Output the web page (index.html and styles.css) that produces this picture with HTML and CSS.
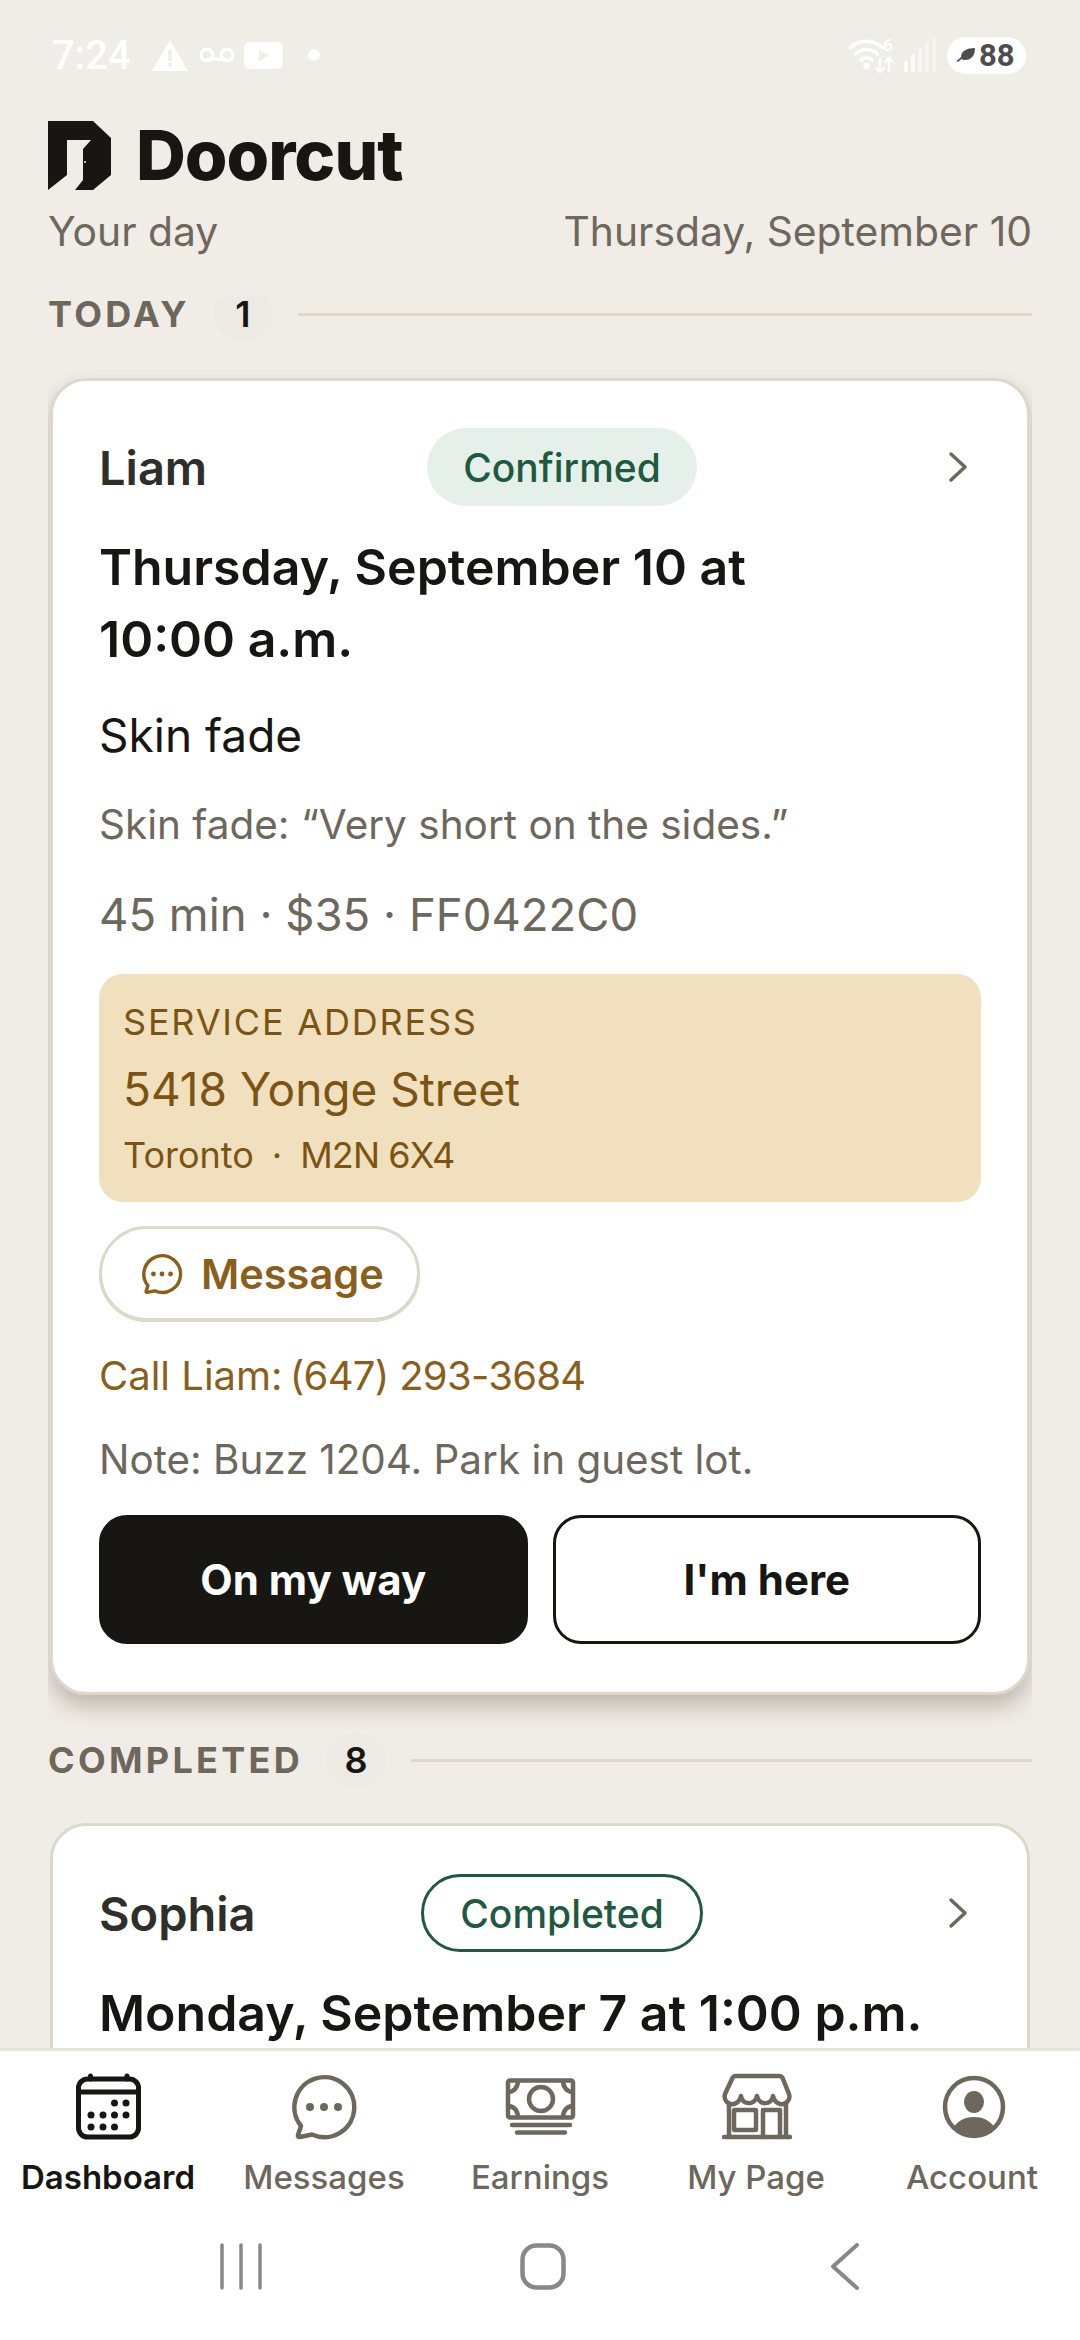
FILE: index.html
```html
<!DOCTYPE html>
<html lang="en">
<head>
  <meta charset="UTF-8">
  <meta name="viewport" content="width=device-width, initial-scale=1.0">
  <title>Doorcut</title>
  <link rel="stylesheet" href="styles.css">
</head>
<body>
  <!-- Status bar -->
  <div class="status">
    <span class="status-time">7:24</span>
    <svg class="ic-warn" viewBox="0 0 36 31"><path d="M18 0 36 31H0Z" fill="#fff"/><path d="M16.3 10h3.4v11h-3.4zM16.3 23h3.4v4h-3.4z" fill="#f0ede6"/></svg>
    <svg class="ic-vm" viewBox="0 0 36 16"><circle cx="8" cy="8" r="5.8" fill="none" stroke="#fff" stroke-width="3.4"/><circle cx="28" cy="8" r="5.8" fill="none" stroke="#fff" stroke-width="3.4"/><path d="M8 12.2H28" stroke="#fff" stroke-width="3.4"/></svg>
    <svg class="ic-yt" viewBox="0 0 39 27"><rect width="39" height="27" rx="6" fill="#fff"/><path d="M15 8 25 13.500 15 19Z" fill="#f0ede6"/></svg>
    <span class="status-dot"></span>
    <span class="status-spacer"></span>
    <svg class="ic-wifi" viewBox="0 0 50 36">
      <g fill="none" stroke="#fff" stroke-width="3.600" stroke-linecap="round">
        <path d="M2 10C12 1 25 1 35 10"/><path d="M7.500 16C14 10 23 10 29.500 16"/><path d="M13 22C16 19 21 19 24 22"/>
      </g>
      <circle cx="18.500" cy="28" r="3.200" fill="#fff"/>
      <g fill="none" stroke="#fff" stroke-width="2.400">
        <path d="M32 20V34M27.500 29.500 32 34 36.500 29.500"/><path d="M41 34V20M36.500 24.500 41 20 45.500 24.500"/>
      </g>
    </svg>
    <span class="status-six">6</span>
    <svg class="ic-signal" viewBox="0 0 32 34">
      <rect x="0" y="23" width="4" height="11" rx="1.500" fill="#fff"/>
      <rect x="7" y="16" width="4" height="18" rx="1.500" fill="#fff" opacity=".75"/>
      <rect x="14" y="10" width="4" height="24" rx="1.500" fill="#fff" opacity=".5"/>
      <rect x="21" y="5" width="4" height="29" rx="1.500" fill="#fff" opacity=".4"/>
      <rect x="28" y="0" width="4" height="34" rx="1.500" fill="#fff" opacity=".4"/>
    </svg>
    <span class="battery">
      <svg class="ic-leaf" viewBox="0 0 20 16"><path d="M5 10C5 4 11 1 19 1 19 9 15 13 9 13 7.500 13 6.500 12.500 5.500 12L2 15 .5 14 4 11Z" fill="#4d4d4f"/></svg>
      88
    </span>
  </div>

  <div class="content">
    <div class="brand">
      <svg class="brand-mark" viewBox="0 0 63 69">
        <path d="M0 0H45L63 17V54L45 69H27L35 59V28L43 19H19V54L0 69Z" fill="#171612"/>
        <circle cx="37" cy="41" r="1" fill="#f0ede6"/>
      </svg>
      <span class="brand-name">Doorcut</span>
    </div>

    <div class="day-row">
      <span>Your day</span>
      <span>Thursday, September 10</span>
    </div>

    <!-- Today -->
    <div class="section-label section-today">
      <span class="section-title">TODAY</span>
      <span class="section-count">1</span>
      <span class="section-line"></span>
    </div>

    <div class="card card-today">
      <div class="card-head">
        <span class="client">Liam</span>
        <span class="pill pill-confirmed">Confirmed</span>
        <svg class="chevron" viewBox="0 0 20 32"><path d="M3 3 17 16 3 29" fill="none" stroke="#6d675c" stroke-width="3.500" stroke-linecap="round" stroke-linejoin="round"/></svg>
      </div>
      <div class="when">Thursday, September 10 at 10:00&nbsp;a.m.</div>
      <div class="service">Skin fade</div>
      <div class="request">Skin fade: “Very short on the sides.”</div>
      <div class="meta">45 min · $35 · FF0422C0</div>

      <div class="address">
        <div class="address-label">SERVICE ADDRESS</div>
        <div class="address-street">5418 Yonge Street</div>
        <div class="address-city">Toronto<span class="address-sep">·</span><span class="address-postal">M2N 6X4</span></div>
      </div>

      <button class="message-btn">
        <svg class="message-icon" viewBox="0 0 72 72">
          <path d="M13 55A30 30 0 1 1 24 63.500L12 66Q9.500 66.500 10 64Z" fill="none" stroke="#8a5f1b" stroke-width="5.500" stroke-linejoin="round"/>
          <circle cx="22" cy="36" r="4" fill="#8a5f1b"/><circle cx="36" cy="36" r="4" fill="#8a5f1b"/><circle cx="50" cy="36" r="4" fill="#8a5f1b"/>
        </svg>
        Message
      </button>

      <div class="call">Call Liam:<span class="call-number">(647) 293-3684</span></div>
      <div class="note">Note: Buzz 1204. Park in guest lot.</div>

      <div class="actions">
        <button class="action action-dark">On my way</button>
        <button class="action action-light">I'm here</button>
      </div>
    </div>

    <!-- Completed -->
    <div class="section-label section-completed">
      <span class="section-title">COMPLETED</span>
      <span class="section-count">8</span>
      <span class="section-line"></span>
    </div>

    <div class="card card-completed">
      <div class="card-head">
        <span class="client">Sophia</span>
        <span class="pill pill-completed">Completed</span>
        <svg class="chevron" viewBox="0 0 20 32"><path d="M3 3 17 16 3 29" fill="none" stroke="#6d675c" stroke-width="3.500" stroke-linecap="round" stroke-linejoin="round"/></svg>
      </div>
      <div class="when">Monday, September 7 at 1:00&nbsp;p.m.</div>
    </div>
  </div>

  <!-- Bottom tabs -->
  <nav class="tabbar">
    <div class="tab tab-active">
      <svg class="tab-icon" viewBox="0 0 72 72">
        <rect x="6.500" y="8" width="60" height="58" rx="9" fill="none" stroke="#171612" stroke-width="5"/>
        <path d="M6.500 21H66.500" stroke="#171612" stroke-width="5"/>
        <path d="M18.500 5V8M55 5V8" stroke="#171612" stroke-width="5" stroke-linecap="round"/>
        <g fill="#171612">
          <circle cx="42.500" cy="32" r="3.500"/><circle cx="54" cy="32" r="3.500"/>
          <circle cx="19" cy="44" r="3.500"/><circle cx="31" cy="44" r="3.500"/><circle cx="42.500" cy="44" r="3.500"/><circle cx="54" cy="44" r="3.500"/>
          <circle cx="19" cy="56" r="3.500"/><circle cx="31" cy="56" r="3.500"/><circle cx="42.500" cy="56" r="3.500"/>
        </g>
      </svg>
      <span>Dashboard</span>
    </div>
    <div class="tab">
      <svg class="tab-icon" viewBox="0 0 72 72">
        <path d="M13 55A30 30 0 1 1 24 63.500L12 66Q9.500 66.500 10 64Z" fill="none" stroke="#6d675c" stroke-width="4.500" stroke-linejoin="round"/>
        <circle cx="22" cy="36" r="4" fill="#6d675c"/><circle cx="36" cy="36" r="4" fill="#6d675c"/><circle cx="50" cy="36" r="4" fill="#6d675c"/>
      </svg>
      <span>Messages</span>
    </div>
    <div class="tab">
      <svg class="tab-icon" viewBox="0 0 72 72">
        <g fill="none" stroke="#6d675c" stroke-width="4.500">
          <rect x="4" y="9.500" width="65" height="37" rx="2"/>
          <circle cx="37" cy="28" r="12"/>
          <path d="M4 21C10 21 14 16 14 9.500M69 21C63 21 59 16 59 9.500M4 35C10 35 14 40 14 46.500M69 35C63 35 59 40 59 46.500"/>
        </g>
        <path d="M8 54H66M13 61.500H61" stroke="#6d675c" stroke-width="4.500" stroke-linecap="round"/>
      </svg>
      <span>Earnings</span>
    </div>
    <div class="tab">
      <svg class="tab-icon" viewBox="0 0 72 72">
        <g fill="none" stroke="#6d675c" stroke-width="4.500" stroke-linejoin="round" stroke-linecap="round">
          <path d="M16 5H59Q62 5 63 8L69 23C71 30 65 34 60 33 56 32 54 29 53 25 52 34 39 35 37 25 35 35 22 34 21 25 20 29 18 32 14 33 9 34 3 30 5 23L12 8Q13 5 16 5Z"/>
          <path d="M9 33V66M66 33V66M4 66H70"/>
          <rect x="14" y="39" width="22" height="20" rx="1"/>
          <path d="M43 66V39H60V66"/>
        </g>
      </svg>
      <span>My Page</span>
    </div>
    <div class="tab">
      <svg class="tab-icon" viewBox="0 0 72 72">
        <circle cx="38" cy="36" r="29" fill="none" stroke="#6d675c" stroke-width="4.500"/>
        <ellipse cx="38" cy="31" rx="10" ry="11" fill="#6d675c"/>
        <path d="M17 57C22 49 30 46 38 46 46 46 54 49 59 57A29 29 0 0 1 17 57Z" fill="#6d675c"/>
      </svg>
      <span>Account</span>
    </div>
  </nav>

  <!-- Android nav -->
  <div class="sysnav">
    <svg class="sys-lines" viewBox="0 0 42 47"><path d="M2 2V45M21 2V45M40 2V45" stroke="#888" stroke-width="3.500" stroke-linecap="round"/></svg>
    <svg class="sys-home" viewBox="0 0 46 47"><rect x="2.500" y="2.500" width="41" height="42" rx="14" fill="none" stroke="#888" stroke-width="4.500"/></svg>
    <svg class="sys-back" viewBox="0 0 30 47"><path d="M27 2 3 23.500 27 45" fill="none" stroke="#888" stroke-width="4" stroke-linecap="round" stroke-linejoin="round"/></svg>
  </div>
</body>
</html>
```

FILE: styles.css
```css
/* General Styling */
html, body {
  margin: 0;
  padding: 0;
}

body {
  width: 1080px;
  height: 2340px;
  overflow: hidden;
  display: flex;
  flex-direction: column;
  background: #f0ede6;
  color: #171612;
  font-family: Inter, "Liberation Sans", sans-serif;
}

button {
  font-family: inherit;
  cursor: pointer;
}

/* Status bar */
.status {
  flex: none;
  height: 110px;
  display: flex;
  align-items: center;
  padding: 0 54px 0 52px;
  color: #fff;
  box-sizing: border-box;
}

.status-time {
  font-family: Roboto, sans-serif;
  font-size: 40px;
  font-weight: 500;
  width: 100px;
}

.ic-warn { width: 36px; height: 31px; }
.ic-vm { width: 36px; height: 16px; margin-left: 11px; }
.ic-yt { width: 39px; height: 27px; margin-left: 9px; }

.status-dot {
  width: 12px;
  height: 12px;
  border-radius: 50%;
  background: #fff;
  margin-left: 25px;
}

.status-spacer { flex: 1; }

.ic-wifi { width: 50px; height: 36px; margin-top: 2px; }

.status-six {
  font-family: Roboto, sans-serif;
  font-size: 17px;
  font-weight: 500;
  margin: -20px 0 0 -15px;
  width: 21px;
}

.ic-signal { width: 32px; height: 34px; margin-right: 11px; }

.battery {
  width: 79px;
  height: 37px;
  box-sizing: border-box;
  border-radius: 19px;
  background: #fff;
  display: flex;
  align-items: center;
  gap: 3px;
  padding-left: 9px;
  color: #4d4d4f;
  font-family: Roboto, sans-serif;
  font-size: 31px;
  font-weight: 700;
}

.ic-leaf { width: 20px; height: 16px; }

/* Main scroll area */
.content {
  flex: 1;
  min-height: 0;
  overflow: hidden;
  padding: 0 48px;
}

.brand {
  margin-top: 10px;
  height: 70px;
  display: flex;
  align-items: center;
}

.brand-mark { width: 63px; height: 69px; }

.brand-name {
  margin-left: 25px;
  font-size: 69px;
  font-weight: 800;
  letter-spacing: -1px;
  line-height: 70px;
}

.day-row {
  margin-top: 16px;
  display: flex;
  justify-content: space-between;
  font-size: 40.800px;
  line-height: 50px;
  color: #6d675c;
}

.section-label {
  display: flex;
  align-items: center;
  height: 54px;
}

.section-today { margin-top: 31px; }
.section-completed { margin-top: 38px; }

.section-title {
  font-size: 36px;
  font-weight: 700;
  letter-spacing: 3.300px;
  color: #6d675c;
}

.section-count {
  width: 60px;
  height: 54px;
  margin-left: 23px;
  border-radius: 50%;
  background: #edeae3;
  display: flex;
  align-items: center;
  justify-content: center;
  font-size: 36px;
  font-weight: 600;
}

.section-today .section-count { clip-path: inset(10px 0 0 0); }

.section-line {
  flex: 1;
  height: 3px;
  margin-left: 25px;
  background: #dcd7c9;
}

/* Cards */
.card {
  margin: 0 2px;
  background: #fff;
  border: 3px solid #ddd8ca;
  border-radius: 36px;
  padding: 47px 46px 48px;
}

.card-today {
  margin-top: 37px;
  box-shadow: 0 12px 22px rgba(60, 50, 30, 0.28);
  clip-path: inset(-8px -2px -40px -2px);
}

.card-completed {
  margin-top: 36px;
  padding-top: 48px;
}

.card-head {
  display: grid;
  grid-template-columns: 283px 360px 1fr;
  align-items: center;
  height: 78px;
}

.client {
  font-size: 47px;
  font-weight: 600;
  color: #2e2e2b;
}

.pill {
  justify-self: center;
  box-sizing: border-box;
  height: 78px;
  border-radius: 39px;
  display: flex;
  align-items: center;
  font-size: 39px;
  font-weight: 500;
  color: #1f5a40;
}

.pill-confirmed {
  width: 270px;
  justify-content: center;
  background: #e5f0ea;
}

.pill-completed {
  width: 282px;
  justify-content: center;
  border: 3px solid #1f5a40;
}

.chevron {
  justify-self: end;
  width: 20px;
  height: 32px;
  margin-right: 13px;
}

.when {
  margin-top: 25px;
  font-size: 50px;
  font-weight: 600;
  line-height: 72px;
}

.service {
  margin-top: 32px;
  font-size: 46px;
  line-height: 56px;
}

.request {
  margin-top: 37px;
  font-size: 40.500px;
  line-height: 50px;
  color: #6d675c;
}

.meta {
  margin-top: 37px;
  font-size: 45.500px;
  line-height: 56px;
  color: #6d675c;
}

.address {
  margin-top: 31px;
  padding: 28px 24px 25px;
  border-radius: 24px;
  background: #f0e0bd;
  color: #7b5313;
}

.address-label {
  font-size: 36px;
  line-height: 40px;
  letter-spacing: 1.800px;
}

.address-street {
  margin-top: 19px;
  font-size: 46px;
  line-height: 56px;
}

.address-city {
  margin-top: 16px;
  font-size: 36px;
  line-height: 44px;
}

.address-sep { margin: 0 18px; }
.address-postal { letter-spacing: -0.900px; }

.message-btn {
  margin-top: 24px;
  width: 321px;
  height: 95px;
  display: flex;
  align-items: center;
  padding: 0 0 0 38px;
  gap: 17px;
  box-sizing: border-box;
  background: #fff;
  border: 3px solid #ddd8ca;
  border-radius: 48px;
  box-shadow: 0 1px 0 #ddd8ca;
  color: #8a5f1b;
  font-size: 41.500px;
  font-weight: 600;
}

.message-icon { width: 44px; height: 44px; }

.call {
  margin-top: 30px;
  font-size: 40px;
  line-height: 50px;
  color: #8a5f1b;
}

.call-number {
  margin-left: 7px;
  letter-spacing: -0.700px;
}

.note {
  margin-top: 34px;
  font-size: 40.400px;
  line-height: 50px;
  color: #6d675c;
}

.actions {
  margin-top: 30px;
  display: grid;
  grid-template-columns: 1fr 1fr;
  gap: 25px;
}

.action {
  height: 129px;
  border-radius: 28px;
  font-size: 42px;
  font-weight: 700;
  border: 3px solid #171612;
}

.action-dark {
  background: #171612;
  color: #fff;
}

.action-light {
  background: #fff;
  color: #171612;
}

/* Bottom tabs */
.tabbar {
  flex: none;
  display: grid;
  grid-template-columns: repeat(5, 1fr);
  padding-top: 20px;
  background: #fff;
  border-top: 3px solid #e8e5dc;
}

.tab {
  display: flex;
  flex-direction: column;
  align-items: center;
  font-size: 33px;
  font-weight: 500;
  line-height: 44px;
  color: #6d675c;
}

.tab-active {
  color: #171612;
  font-weight: 600;
}

.tab-icon {
  width: 72px;
  height: 72px;
  margin-bottom: 12px;
}

/* Android nav */
.sysnav {
  flex: none;
  height: 141px;
  box-sizing: border-box;
  padding: 44px 0 0 90px;
  background: #fff;
  display: grid;
  grid-template-columns: repeat(3, 302px);
  justify-items: center;
  align-items: start;
}

.sys-lines { width: 42px; height: 47px; }
.sys-home { width: 46px; height: 47px; }
.sys-back { width: 30px; height: 47px; }
```
